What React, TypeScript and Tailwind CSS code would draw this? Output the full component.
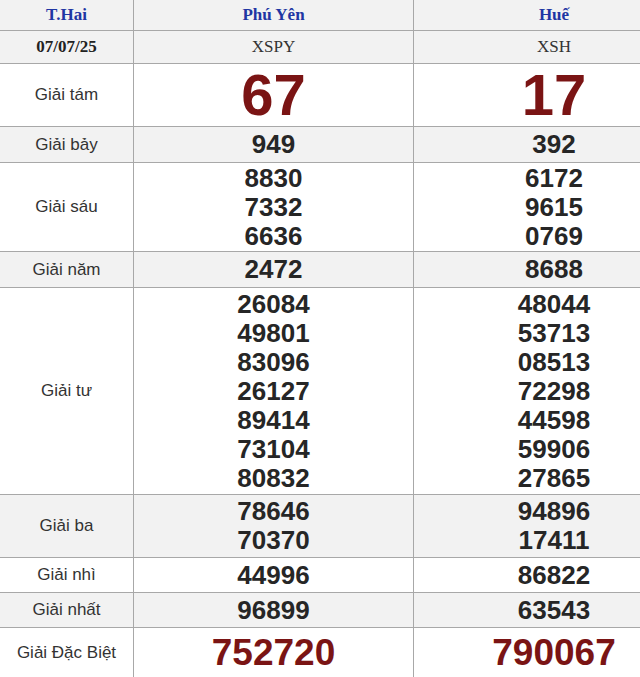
const rows: { label: string; a: string[]; b: string[]; h: string; gray: boolean; kind?: "big" | "special" }[] = [
  { label: "Giải tám", a: ["67"], b: ["17"], h: "h-[63px]", gray: false, kind: "big" },
  { label: "Giải bảy", a: ["949"], b: ["392"], h: "h-[36px]", gray: true },
  { label: "Giải sáu", a: ["8830", "7332", "6636"], b: ["6172", "9615", "0769"], h: "h-[89px]", gray: false },
  { label: "Giải năm", a: ["2472"], b: ["8688"], h: "h-[36px]", gray: true },
  {
    label: "Giải tư",
    a: ["26084", "49801", "83096", "26127", "89414", "73104", "80832"],
    b: ["48044", "53713", "08513", "72298", "44598", "59906", "27865"],
    h: "h-[207px]",
    gray: false,
  },
  { label: "Giải ba", a: ["78646", "70370"], b: ["94896", "17411"], h: "h-[63px]", gray: true },
  { label: "Giải nhì", a: ["44996"], b: ["86822"], h: "h-[35px]", gray: false },
  { label: "Giải nhất", a: ["96899"], b: ["63543"], h: "h-[35px]", gray: true },
  { label: "Giải Đặc Biệt", a: ["752720"], b: ["790067"], h: "h-[50px]", gray: false, kind: "special" },
];

function Numbers({ values, kind }: { values: string[]; kind?: "big" | "special" }) {
  const cls =
    kind === "big"
      ? "text-[58px] leading-[60px] text-[#7a1414]"
      : kind === "special"
        ? "text-[37px] leading-[40px] text-[#7a1414]"
        : "text-[26px] leading-[29px] text-[#262626]";
  return (
    <div className="flex flex-col items-center">
      {values.map((v) => (
        <span key={v} className={`font-bold ${cls}`}>
          {v}
        </span>
      ))}
    </div>
  );
}

export default function App() {
  return (
    <div className="w-[640px] h-[677px] overflow-hidden bg-white font-['Liberation_Sans',Arial,sans-serif]">
      <div className="w-[694px]">
        <div className="grid grid-cols-[134px_280px_280px] h-[31px] bg-[#f2f2f2] border-b border-[#a8a8a8] font-['Liberation_Serif','Times_New_Roman',serif] text-[17px] font-bold text-[#1f36a3]">
          <div className="flex items-center justify-center border-r border-[#a8a8a8]">T.Hai</div>
          <div className="flex items-center justify-center border-r border-[#a8a8a8]">Phú Yên</div>
          <div className="flex items-center justify-center">Huế</div>
        </div>
        <div className="grid grid-cols-[134px_280px_280px] h-[33px] bg-[#f2f2f2] border-b border-[#a8a8a8] font-['Liberation_Serif','Times_New_Roman',serif] text-[17px] text-[#333]">
          <div className="flex items-center justify-center border-r border-[#a8a8a8] font-bold text-[#222]">07/07/25</div>
          <div className="flex items-center justify-center border-r border-[#a8a8a8]">XSPY</div>
          <div className="flex items-center justify-center">XSH</div>
        </div>
        {rows.map((r) => (
          <div
            key={r.label}
            className={`grid grid-cols-[134px_280px_280px] border-b border-[#a8a8a8] ${r.h} ${r.gray ? "bg-[#f2f2f2]" : "bg-white"}`}
          >
            <div className="flex items-center justify-center border-r border-[#a8a8a8] text-[17px] text-[#333]">
              {r.label}
            </div>
            <div className="flex items-center justify-center border-r border-[#a8a8a8]">
              <Numbers values={r.a} kind={r.kind} />
            </div>
            <div className="flex items-center justify-center">
              <Numbers values={r.b} kind={r.kind} />
            </div>
          </div>
        ))}
      </div>
    </div>
  );
}
